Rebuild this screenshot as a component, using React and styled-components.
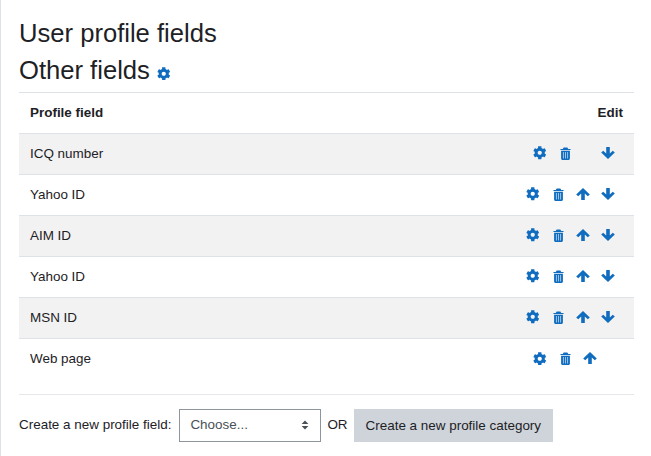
import React from "react";
import styled, { createGlobalStyle } from "styled-components";
import { FaCog } from "react-icons/fa";

const GlobalStyle = createGlobalStyle`
  html, body {
    margin: 0;
    padding: 0;
    background: #fff;
    font-family: "Liberation Sans", Arial, sans-serif;
    color: #1d2125;
  }
`;

const rows = [
  { name: "ICQ number", up: false, down: true },
  { name: "Yahoo ID", up: true, down: true },
  { name: "AIM ID", up: true, down: true },
  { name: "Yahoo ID", up: true, down: true },
  { name: "MSN ID", up: true, down: true },
  { name: "Web page", up: true, down: false },
];

const TrashIcon = () => (
  <svg width="11" height="13" viewBox="0 0 12 14" fill="currentColor">
    <path d="M4 0.5H8L9 2H11.5V3.2H0.5V2H3Z" />
    <path d="M1.2 4H10.8V12.5C10.8 13.3 10.2 14 9.5 14H2.5C1.8 14 1.2 13.3 1.2 12.5Z" />
    <path d="M3.2 5.4H4.2V12.4H3.2ZM5.5 5.4H6.5V12.4H5.5ZM7.8 5.4H8.8V12.4H7.8Z" fill="#a9cbe8" />
  </svg>
);

const ArrowUpIcon = () => (
  <svg width="14" height="14" viewBox="0 0 14 14" fill="currentColor">
    <path d="M7 1L13.8 7.4L11.8 9.3L8.8 6.4V13H5.2V6.4L2.2 9.3L0.2 7.4Z" />
  </svg>
);

const ArrowDownIcon = () => (
  <svg width="14" height="14" viewBox="0 0 14 14" fill="currentColor">
    <path d="M7 13L13.8 6.6L11.8 4.7L8.8 7.6V1H5.2V7.6L2.2 4.7L0.2 6.6Z" />
  </svg>
);

const App = () => {
  return (
    <Page>
      <GlobalStyle />
      <Title>User profile fields</Title>
      <SubTitle>
        Other fields
        <HeadingIcon>
          <FaCog />
        </HeadingIcon>
      </SubTitle>
      <Table>
        <thead>
          <tr>
            <HeadCell>Profile field</HeadCell>
            <HeadCell $right>Edit</HeadCell>
          </tr>
        </thead>
        <tbody>
          {rows.map((row, index) => (
            <Row key={index} $striped={index % 2 === 0}>
              <Cell>{row.name}</Cell>
              <Cell>
                <Actions>
                  <Action>
                    <FaCog />
                  </Action>
                  <Action>
                    <TrashIcon />
                  </Action>
                  {row.up ? (
                    <Action>
                      <ArrowUpIcon />
                    </Action>
                  ) : (
                    <Spacer />
                  )}
                  {row.down ? (
                    <Action>
                      <ArrowDownIcon />
                    </Action>
                  ) : (
                    <Spacer />
                  )}
                </Actions>
              </Cell>
            </Row>
          ))}
        </tbody>
      </Table>
      <CreateBar>
        <Label>Create a new profile field:</Label>
        <SelectBox>
          <SelectText>Choose...</SelectText>
          <Caret width="8" height="10" viewBox="0 0 8 10">
            <path d="M4 0.5 L7.4 4 H0.6 Z M4 9.5 L0.6 6 H7.4 Z" fill="#495057" />
          </Caret>
        </SelectBox>
        <Or>OR</Or>
        <Button>Create a new profile category</Button>
      </CreateBar>
    </Page>
  );
};

export default App;

const Page = styled.div`
  width: 651px;
  height: 456px;
  box-sizing: border-box;
  padding: 0 17px 0 18px;
  border-left: 1px solid #dee2e6;
  overflow: hidden;
`;
const Title = styled.h2`
  margin: 0;
  padding-top: 17px;
  font-size: 25.6px;
  line-height: 32px;
  font-weight: 400;
`;
const SubTitle = styled.h3`
  margin: 0;
  padding-top: 5px;
  height: 38px;
  font-size: 25.6px;
  line-height: 32px;
  font-weight: 400;
`;
const HeadingIcon = styled.span`
  margin-left: 7px;
  color: #0f6cbf;
  font-size: 13.5px;
  svg {
    vertical-align: -1px;
  }
`;
const Table = styled.table`
  width: 100%;
  border-collapse: collapse;
  font-size: 13.44px;
  line-height: 20px;
`;
const HeadCell = styled.th`
  height: 41px;
  box-sizing: border-box;
  padding: 0 11px;
  border-top: 1px solid #dee2e6;
  border-bottom: 1px solid #dee2e6;
  font-weight: 700;
  text-align: ${(props) => (props.$right ? "right" : "left")};
`;
const Row = styled.tr`
  background: ${(props) => (props.$striped ? "#f2f2f2" : "#fff")};
`;
const Cell = styled.td`
  height: 41px;
  box-sizing: border-box;
  padding: 0 11px;
  border-bottom: 1px solid #dee2e6;
  ${Row}:last-child & {
    border-bottom: none;
  }
`;
const Actions = styled.div`
  display: flex;
  justify-content: flex-end;
  align-items: center;
  padding: 0 2.5px 2px 0;
`;
const Action = styled.span`
  display: flex;
  width: 25px;
  justify-content: center;
  color: #0f6cbf;
  font-size: 13.5px;
`;
const Spacer = styled.span`
  width: 18px;
`;
const CreateBar = styled.div`
  display: flex;
  align-items: center;
  margin-top: 14px;
  padding-top: 14px;
  border-top: 1px solid #e5e7ea;
  font-size: 13.44px;
`;
const Label = styled.span`
  margin: 0 8px 2px 0;
`;
const SelectBox = styled.div`
  display: flex;
  align-items: center;
  justify-content: space-between;
  box-sizing: border-box;
  width: 142px;
  height: 33px;
  padding: 0 11px 0 10px;
  border: 1px solid #8f959e;
  color: #495057;
`;
const SelectText = styled.span`
  margin-bottom: 2px;
`;
const Caret = styled.svg`
  display: block;
`;
const Or = styled.span`
  margin: 0 6px 2px;
`;
const Button = styled.div`
  display: flex;
  align-items: center;
  height: 33px;
  padding: 0 12px;
  background: #ced4da;
  color: #1d2125;
`;
